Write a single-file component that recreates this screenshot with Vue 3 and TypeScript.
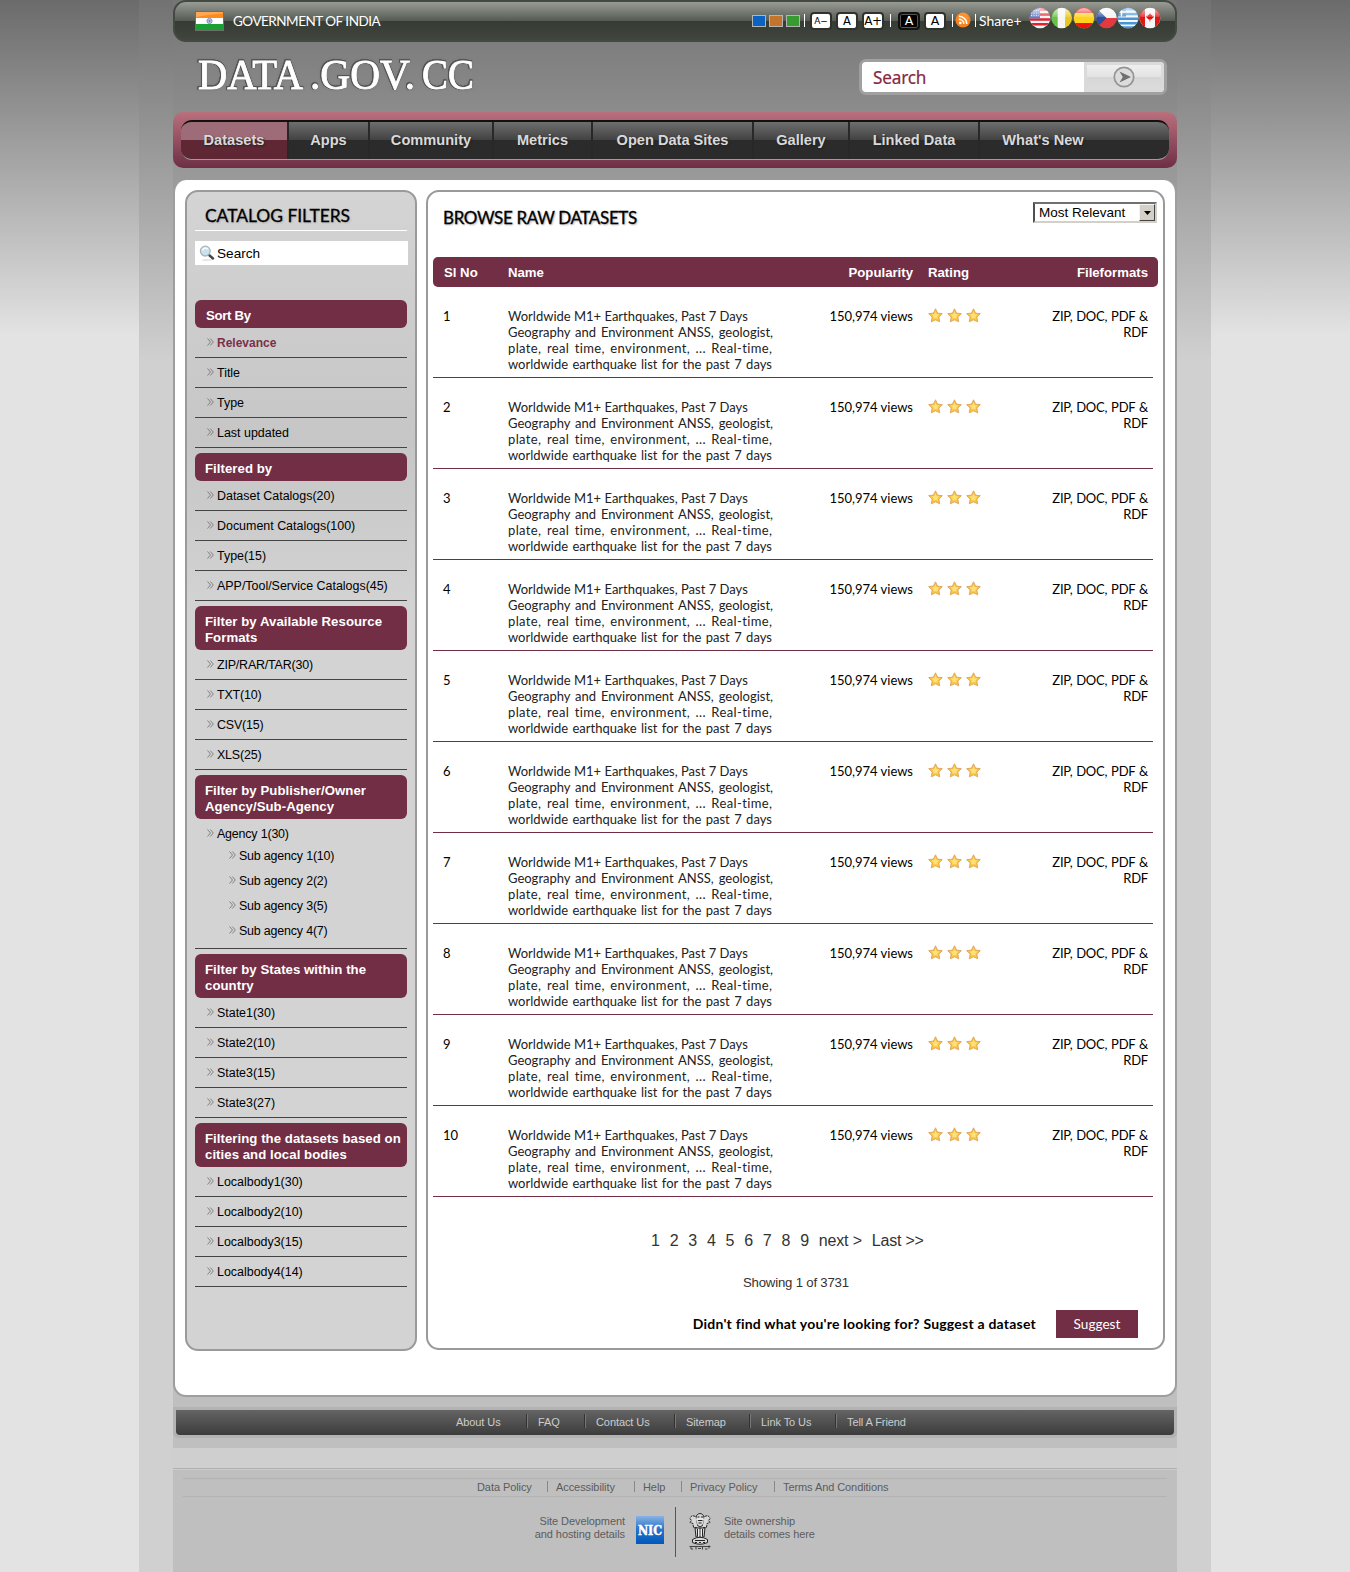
<script setup lang="ts">
interface Filter { title: string; lines: string[]; items: string[]; active?: string; subs?: string[]; tight?: boolean }
interface Link { label: string; w: number }

const nav: Link[] = [
  { label: 'Datasets', w: 108 }, { label: 'Apps', w: 81 }, { label: 'Community', w: 124 },
  { label: 'Metrics', w: 99 }, { label: 'Open Data Sites', w: 161 }, { label: 'Gallery', w: 96 },
  { label: 'Linked Data', w: 130 }, { label: "What's New", w: 126 },
]
const filters: Filter[] = [
  { title: 'Sort By', lines: ['Sort By'], items: ['Relevance', 'Title', 'Type', 'Last updated'], active: 'Relevance' },
  { title: 'Filtered by', lines: ['Filtered by'], items: ['Dataset Catalogs(20)', 'Document Catalogs(100)', 'Type(15)', 'APP/Tool/Service Catalogs(45)'] },
  { title: 'Formats', lines: ['Filter by Available Resource', 'Formats'], items: ['ZIP/RAR/TAR(30)', 'TXT(10)', 'CSV(15)', 'XLS(25)'], tight: true },
  { title: 'Agency', lines: ['Filter by Publisher/Owner', 'Agency/Sub-Agency'], items: ['Agency 1(30)'], subs: ['Sub agency 1(10)', 'Sub agency 2(2)', 'Sub agency 3(5)', 'Sub agency 4(7)'], tight: true },
  { title: 'States', lines: ['Filter by States within the', 'country'], items: ['State1(30)', 'State2(10)', 'State3(15)', 'State3(27)'] },
  { title: 'Cities', lines: ['Filtering the datasets based on', 'cities and local bodies'], items: ['Localbody1(30)', 'Localbody2(10)', 'Localbody3(15)', 'Localbody4(14)'] },
]
const description = ['Worldwide M1+ Earthquakes, Past 7 Days', 'Geography and Environment ANSS, geologist,', 'plate, real time, environment, ... Real-time,', 'worldwide earthquake list for the past 7 days']
const rows = Array.from({ length: 10 }, (_, i) => i + 1)
const pages = Array.from({ length: 9 }, (_, i) => i + 1)
const footA: Link[] = [
  { label: 'About Us', w: 70 }, { label: 'FAQ', w: 58 }, { label: 'Contact Us', w: 90 },
  { label: 'Sitemap', w: 75 }, { label: 'Link To Us', w: 86 }, { label: 'Tell A Friend', w: 80 },
]
const footB: Link[] = [
  { label: 'Data Policy', w: 70 }, { label: 'Accessibility', w: 87 }, { label: 'Help', w: 47 },
  { label: 'Privacy Policy', w: 93 }, { label: 'Terms And Conditions', w: 120 },
]
</script>

<template>
  <div class="page">
    <div class="band">
      <div class="container">
        <header class="topbar">
          <svg class="flag" width="29" height="20" viewBox="0 0 29 20">
            <rect x=".5" y=".5" width="28" height="19" fill="#fff" stroke="#6c6f68" />
            <rect x="1" y="1" width="27" height="6" fill="#ff8a1c" />
            <rect x="1" y="13" width="27" height="6" fill="#1a9f34" />
            <path d="M1 1h27v1.500Q14 3 1 6z" fill="#ffb36c" opacity=".7" />
            <circle cx="14.500" cy="10" r="2.600" fill="#b9bfe0" stroke="#8088c0" stroke-width=".9" />
            <circle cx="14.500" cy="10" r=".8" fill="#5560a8" />
          </svg>
          <span class="gov">GOVERNMENT OF INDIA</span>
          <div class="tools">
            <i class="sw blue"></i><i class="sw orange"></i><i class="sw green"></i>
            <i class="bar b1"></i>
            <span class="ab s">A−</span><span class="ab m">A</span><span class="ab l">A+</span>
            <i class="bar b2"></i>
            <span class="ab dark">A</span><span class="ab lt">A</span>
            <i class="bar b3"></i>
            <svg class="rss" width="16" height="16" viewBox="0 0 16 16">
              <circle cx="8" cy="8" r="7.600" fill="#f58220" /><circle cx="8" cy="6" r="5.500" fill="#ff9c3c" opacity=".6" />
              <circle cx="5.300" cy="11" r="1.300" fill="#fff" />
              <path d="M4 7.300a4.800 4.800 0 0 1 4.800 4.800M4 4.300a7.800 7.800 0 0 1 7.800 7.800" fill="none" stroke="#fff" stroke-width="1.500" />
            </svg>
            <i class="bar b4"></i>
            <span class="share">Share+</span>
            <svg class="flags" width="132" height="22" viewBox="0 0 132 22">
              <defs>
                <clipPath id="disc"><circle cx="11" cy="11" r="10.300" /></clipPath>
                <linearGradient id="gloss" x1="0" y1="0" x2="0" y2="1"><stop offset="0" stop-color="#fff" stop-opacity=".75" /><stop offset=".48" stop-color="#fff" stop-opacity=".15" /><stop offset=".5" stop-color="#fff" stop-opacity="0" /></linearGradient>
              </defs>
              <g clip-path="url(#disc)">
                <rect width="22" height="22" fill="#f3f3f3" />
                <path d="M0 2.500h22M0 7.500h22M0 12.500h22M0 17.300h22" stroke="#dd2230" stroke-width="2.500" />
                <rect width="11" height="11.300" fill="#5b7fc4" />
                <path d="M2 3.500h8M2 6h8M2 8.500h8" stroke="#fff" stroke-width=".8" stroke-dasharray="1 1.500" />
              </g>
              <g transform="translate(21.700)"><g clip-path="url(#disc)"><rect width="7.500" height="22" fill="#6cc04a" /><rect x="7" width="8" height="22" fill="#f6f6f2" /><rect x="15" width="7" height="22" fill="#e8c820" /></g></g>
              <g transform="translate(44)"><g clip-path="url(#disc)"><rect width="22" height="22" fill="#ffd21c" /><rect width="22" height="6" fill="#e0202c" /><rect y="16" width="22" height="6" fill="#ee1111" /></g></g>
              <g transform="translate(66.500)"><g clip-path="url(#disc)"><rect width="22" height="11" fill="#f2f2f2" /><rect y="11" width="22" height="11" fill="#e23a3e" /><path d="M0 0l11 11L0 22z" fill="#2a4f9c" /></g></g>
              <g transform="translate(88)"><g clip-path="url(#disc)"><rect width="22" height="22" fill="#f4f8fc" /><path d="M0 2.300h22M0 7h22M0 11.800h22M0 16.300h22M0 20.500h22" stroke="#4a94d6" stroke-width="2.400" /><rect width="9" height="9.500" fill="#3c80c4" /><path d="M4.500 0v9.500M0 5h9" stroke="#fff" stroke-width="1.500" /></g></g>
              <g transform="translate(110)"><g clip-path="url(#disc)"><rect width="22" height="22" fill="#f6f6f6" /><rect width="6" height="22" fill="#e01818" /><rect x="16" width="6" height="22" fill="#e01818" /><path d="M11 6l1.200 2 1.200-.6-.3 2 1.900-.9-.7 2.300-2.200 1.700h-.8v2h-.7v-2h-.8L7.700 10.800 7 8.500l1.900.9-.3-2 1.200.6z" fill="#e01010" /></g></g>
              <ellipse v-for="x in [11, 32.7, 55, 77.5, 99, 121]" :key="x" :cx="x" cy="10.500" rx="9.500" ry="9.500" fill="url(#gloss)" />
            </svg>
          </div>
        </header>

        <div class="brand">
          <svg class="logo" width="290" height="44" viewBox="0 0 290 44">
            <text x="4" y="35.500" textLength="105" lengthAdjust="spacingAndGlyphs" class="logo-text">DATA</text>
            <text x="116" y="35.500" textLength="105" lengthAdjust="spacingAndGlyphs" class="logo-text">.GOV.</text>
            <text x="228" y="35.500" textLength="52" lengthAdjust="spacingAndGlyphs" class="logo-text">CC</text>
          </svg>
          <div class="search">
            <span class="search-field">Search</span>
            <span class="search-btn">
              <svg width="22" height="22" viewBox="0 0 22 22"><circle cx="11" cy="11" r="9.700" fill="#dcdcdc" stroke="#949494" stroke-width="1.700" /><path d="M6.500 5.500L18 11 6.500 16.500 9.800 11z" fill="#707070" /></svg>
            </span>
          </div>
        </div>

        <nav class="nav">
          <div class="nav-in">
            <a v-for="(n, i) in nav" :key="n.label" :class="{ on: i === 0, last: i === nav.length - 1 }" :style="{ width: n.w + 'px' }">{{ n.label }}</a>
          </div>
        </nav>

        <main class="main">
          <aside class="side">
            <h2>CATALOG FILTERS</h2>
            <div class="side-search">
              <svg width="17" height="17" viewBox="0 0 17 17">
                <ellipse cx="8" cy="15" rx="5.500" ry=".8" fill="#ddd" />
                <path d="M9.500 9.500l4.500 4" stroke="#444" stroke-width="2.400" stroke-linecap="round" />
                <circle cx="6.300" cy="6.100" r="4.900" fill="#c9e2ee" stroke="#a9b4ba" stroke-width="1.300" />
                <path d="M3.500 5.500a3.300 3.300 0 0 1 5.500-1.500" stroke="#fff" stroke-width="1.200" fill="none" />
              </svg>
              <span>Search</span>
            </div>
            <section v-for="f in filters" :key="f.title" :class="{ tight: f.tight }">
              <h3 :class="{ first: f.active }"><span v-for="l in f.lines" :key="l">{{ l }}</span></h3>
              <ul>
                <li v-for="it in f.items" :key="it" :class="{ active: it === f.active, tall: f.subs }">
                  <div class="item">
                    <svg width="7" height="8" viewBox="0 0 7 8"><path d="M.5.500L3.500 4 .5 7.500M3.300.500L6.300 4 3.300 7.500" fill="none" stroke="#777" stroke-width=".9" /></svg>{{ it }}
                  </div>
                  <div v-for="s in f.subs" :key="s" class="item sub">
                    <svg width="7" height="8" viewBox="0 0 7 8"><path d="M.5.500L3.500 4 .5 7.500M3.300.500L6.300 4 3.300 7.500" fill="none" stroke="#777" stroke-width=".9" /></svg>{{ s }}
                  </div>
                </li>
              </ul>
            </section>
          </aside>

          <section class="content">
            <div class="head">
              <h2>BROWSE RAW DATASETS</h2>
              <div class="select"><span>Most Relevant</span><i><svg width="7" height="4" viewBox="0 0 7 4"><path d="M0 0h7L3.500 4z" fill="#000" /></svg></i></div>
            </div>
            <div class="thead"><span class="c1">Sl No</span><span class="c2">Name</span><span class="c3">Popularity</span><span class="c4">Rating</span><span class="c5">Fileformats</span></div>
            <div v-for="r in rows" :key="r" class="row">
              <span class="c1">{{ r }}</span>
              <span class="c2"><span v-for="(d, i) in description" :key="i" :class="'d' + i">{{ d }}</span></span>
              <span class="c3">150,974 views</span>
              <span class="c4">
                <svg v-for="s in 3" :key="s" width="15" height="15" viewBox="0 0 15 15">
                  <path d="M7.500.8l2 4.300 4.800.6-3.500 3.300.9 4.800-4.200-2-4.200 2 .9-4.800L.7 5.700l4.800-.6z" fill="#fbc53d" stroke="#dba05c" stroke-width=".9" stroke-linejoin="round" />
                  <path d="M7.500 3.500l1.200 2.700 2.800.4-2.200 1.900.5 1.800H5.200l.5-1.800-2.200-1.900 2.800-.4z" fill="#fde27c" />
                </svg>
              </span>
              <span class="c5"><span>ZIP, DOC, PDF &amp;</span><span>RDF</span></span>
            </div>
            <div class="pager"><a v-for="p in pages" :key="p">{{ p }}</a><a class="next">next &gt;</a><a class="end">Last &gt;&gt;</a></div>
            <div class="showing">Showing 1 of 3731</div>
            <div class="suggest"><b>Didn't find what you're looking for? Suggest a dataset</b><span class="btn">Suggest</span></div>
          </section>
        </main>

        <div class="foot1"><div class="foot1-in"><a v-for="f in footA" :key="f.label" :style="{ width: f.w + 'px' }">{{ f.label }}</a></div></div>
        <footer class="foot2">
          <div class="links"><a v-for="f in footB" :key="f.label" :style="{ width: f.w + 'px' }">{{ f.label }}</a></div>
          <div class="credits">
            <p class="dev">Site Development<br />and hosting details</p>
            <svg class="nic" width="28" height="28" viewBox="0 0 28 28">
              <defs><linearGradient id="nicbg" x1="0" y1="0" x2="0" y2="1"><stop offset="0" stop-color="#8ab3e4" /><stop offset=".45" stop-color="#2a74cc" /><stop offset="1" stop-color="#0058ba" /></linearGradient></defs>
              <rect width="28" height="28" fill="url(#nicbg)" />
              <text x="2" y="18.500" textLength="24" lengthAdjust="spacingAndGlyphs" class="nic-text">NIC</text>
            </svg>
            <i class="divider"></i>
            <svg class="emblem" width="24" height="38" viewBox="0 0 24 38">
              <g fill="#d8d8d8" stroke="#222" stroke-width="1">
                <path d="M8.500 3.500Q12-.5 15.500 3.500l1 4-1.500 5.500-3 2-3-2L7.500 7.500z" />
                <path d="M7.500 4.500Q3 2.500 2 6.500l1.500 2L2 10.500l3 1 .5 4h4M16.500 4.500Q21 2.500 22 6.500l-1.500 2 1.500 2-3 1-.5 4h-4" stroke-dasharray="2.500 .8" />
                <path d="M7 16h10l-1 9H8z" />
                <path d="M4.500 27.500Q12 23 19.500 27.500v3Q12 34 4.500 30.500z" />
              </g>
              <path d="M9.500 5h2M13 5h2M10 8.500h4.500M10.500 11h3M9.500 17v7.500M12 16v9M14.500 17v7.500M7 28.500h10M7 30.500h2m2 0h2m2 0h2" stroke="#222" stroke-width="1" />
              <path d="M9 7h6M10.700 17v8M13.300 17v8" stroke="#fff" stroke-width=".8" />
              <path d="M1.500 34.500h21M3 35v2h2M8 35v2.500M10 36.500h3M14.500 35v2.500M17 37h2.500M21 33.500v3" stroke="#333" stroke-width=".9" fill="none" />
            </svg>
            <p class="own">Site ownership<br />details comes here</p>
          </div>
        </footer>
      </div>
    </div>
  </div>
</template>

<style>
body { margin: 0; }
</style>

<style scoped>
* { box-sizing: border-box; }
h2, h3, ul, p { margin: 0; padding: 0; }
i { font-style: normal; display: block; flex: none; }
svg { display: block; flex: none; overflow: visible; }
a, span { white-space: nowrap; }
.page { width: 1350px; height: 1572px; overflow: hidden; font-family: "Liberation Sans", Arial, sans-serif; background: linear-gradient(#6b6b6b 0, #e3e3e3 335px); }
.band { margin-left: 139px; width: 1072px; height: 1572px; padding-left: 34px; background: linear-gradient(#727272 0, #d0d0d0 360px); }
.container { width: 1004px; height: 1572px; display: flex; flex-direction: column; background: linear-gradient(#757575 0, #bfbfbf 360px); }

.topbar { height: 42px; flex: none; border: 2px solid #434a42; border-radius: 13px; background: linear-gradient(#989c95 0, #555b53 19px, #363b33 19px, #40453d 38px); display: flex; padding: 0 14px 0 20px; }
.flag { margin-top: 9px; }
.gov { font: 13.5px/20px Lato, sans-serif; letter-spacing: -.5px; color: #fff; margin: 9px 0 0 9px; }
.tools { display: flex; margin-left: auto; color: #000; }
.sw { width: 14px; height: 12px; border: 1px solid #b5b5b5; margin: 13px 3px 0 0; }
.blue { background: #0a63c0; } .orange { background: #c4742b; } .green { background: #369b30; }
.bar { width: 1px; height: 13px; background: #fff; margin-top: 12px; }
.b1 { margin: 12px 5px 0 1px; } .b2 { margin: 12px 7px 0 2px; } .b3 { margin: 12px 2px 0 2px; } .b4 { margin: 12px 3px 0 4px; }
.ab { width: 22px; height: 18px; border: 2px solid #2e312c; border-radius: 4px; background: #fff; margin: 10px 4px 0 0; display: flex; align-items: center; justify-content: center; font: 12.5px/14px "DejaVu Sans", sans-serif; }
.ab.s { font-size: 9px; } .ab.m { font-size: 11.5px; } .ab.l { letter-spacing: -.5px; font-size: 12px; }
.ab.dark { background: #000; color: #fff; border-color: #111; box-shadow: inset 0 0 0 1px #555; }
.rss { margin-top: 10px; }
.share { font: 14px/20px Lato, sans-serif; color: #fff; margin-top: 9px; width: 42px; }
.flags { margin: 5px 0 0 8px; }

.brand { height: 70px; flex: none; display: flex; justify-content: space-between; padding: 0 10px 0 21px; }
.logo { margin-top: 11px; filter: drop-shadow(.8px 0 0 #555) drop-shadow(-.8px 0 0 #555) drop-shadow(0 .8px 0 #555) drop-shadow(0 -.8px 0 #555) drop-shadow(0 0 1px #777); }
.logo-text { font: 42px "Liberation Serif", serif; fill: #fff; stroke: #fff; stroke-width: .9px; }
.search { margin-top: 17px; width: 308px; height: 36px; border: 3px solid #a0a0a0; border-radius: 7px; overflow: hidden; background: #fff; display: flex; }
.search-field { width: 222px; padding-left: 11px; font: 17.2px/32px "Noto Sans", sans-serif; letter-spacing: -.2px; -webkit-text-stroke: .2px #86293f; color: #86293f; }
.search-btn { flex: 1; border: 3px solid #dadada; background: linear-gradient(#efefef 0, #e3e3e3 50%, #d5d5d5 50%, #dcdcdc); display: flex; align-items: center; justify-content: center; }

.nav { height: 56px; flex: none; padding: 8px; border-radius: 10px; background: linear-gradient(#ba707d, #6d2f45); }
.nav-in { height: 40px; border-radius: 11px; border-top: 2px solid #111; border-bottom: 1px solid #a9979c; overflow: hidden; display: flex; background: linear-gradient(#6e6e6e, #424242 18px, #2b2b2b 18px); }
.nav-in a { flex: none; border-right: 2px solid #282828; line-height: 37px; text-align: center; font-weight: bold; font-size: 14.6px; color: #d9d9d9; text-shadow: 1px 1px 2px #222; }
.nav-in a.on { background: linear-gradient(#9d6c78 18px, #5e2733 18px); }
.nav-in a.last { border: 0; }

.main { margin-top: 12px; height: 1217px; flex: none; border: 2px solid #9e9e9e; border-top: 0; border-radius: 13px; background: #fff; display: flex; padding: 10px 10px 0; }
.side { width: 232px; height: 1161px; border: 2px solid #9a9a9a; border-radius: 13px; padding: 0 8px; background: linear-gradient(#d4d4d4 0, #c6c6c6 250px, #d3d3d3 420px); }
h2 { font: 17px/24px Lato, sans-serif; color: #000; text-shadow: 1px 1px 2px #aaa; -webkit-text-stroke: .3px #000; white-space: nowrap; }
.side h2 { height: 39px; padding: 12px 0 0 10px; border-bottom: 1px solid #fff; font-size: 17.400px; }
.side-search { width: 213px; height: 24px; margin: 10px 0 35px; background: #fff; display: flex; padding: 4px 0 0 4px; font-size: 13.600px; line-height: 17px; }
.side-search span { margin-left: 1px; }
.side section { margin-bottom: 5px; width: 212px; }
.side h3 { background: #712e45; border-radius: 6px; padding: 8px 0 4px 10px; font: bold 13.200px/16px "Liberation Sans", sans-serif; letter-spacing: .05px; color: #fff; }
.side h3.first { padding-left: 11px; letter-spacing: -.3px; }
.side h3 span { display: block; }
ul { list-style: none; }
li { height: 30px; border-bottom: 1px solid #444; }
li.tall { height: 130px; }
.item { display: flex; height: 22px; padding: 6px 0 0 11.500px; font-size: 12.450px; line-height: 18px; white-space: nowrap; color: #000; }
.item svg { margin: 4px 3.500px 0 0; }
.item.sub { height: 25px; padding-left: 33.500px; }
.tight .item { letter-spacing: -.18px; }
.active .item { font-weight: bold; color: #7c3048; font-size: 12px; }

.content { margin-left: 9px; width: 739px; height: 1160px; border: 2px solid #9a9a9a; border-radius: 13px; padding: 0 5px; }
.head { height: 65px; display: flex; justify-content: space-between; }
.head h2 { padding: 14px 0 0 10px; letter-spacing: -.35px; }
.select { width: 124px; height: 21px; margin: 10px 1px 0 0; border: 2px solid; border-color: #707070 #d4d0c8 #d4d0c8 #505050; display: flex; justify-content: space-between; font-size: 13.500px; line-height: 18px; padding-left: 4px; color: #000; }
.select i { width: 16px; border: 1px solid; border-color: #f4f4f4 #444 #444 #f4f4f4; background: #d4d0c8; display: flex; align-items: center; justify-content: center; }
.thead, .row { display: flex; }
.thead { width: 725px; height: 30px; background: #712e45; border-radius: 5px; font: bold 13.200px/31px "Liberation Sans", sans-serif; color: #fff; }
.c1 { width: 75px; padding-left: 10px; flex: none; }
.thead .c1 { padding-left: 11px; }
.c2 { width: 285px; flex: none; }
.c3 { width: 120px; text-align: right; flex: none; }
.c4 { width: 75px; padding-left: 15px; flex: none; }
.c5 { width: 160px; text-align: right; flex: none; }
.row { width: 720px; height: 91px; border-bottom: 1px solid #712e45; padding-top: 21px; font: 13px/16px Lato, sans-serif; font-variant-ligatures: none; color: #000; }
.row .c2 { color: #222; }
.row .c2 > span, .row .c5 > span { display: block; }
.row .d1 { word-spacing: 1.500px; }
.row .d2 { word-spacing: 1.800px; letter-spacing: .37px; }
.row .d3 { word-spacing: 1.100px; }
.row .c5 { letter-spacing: -.22px; word-spacing: .7px; }
.row .c4 { display: flex; gap: 4px; }
.row .c4 svg { flex: none; }
.pager { display: flex; margin: 34px 0 0 218px; font-size: 16px; line-height: 20px; color: #333; }
.pager a { width: 18.650px; flex: none; }
.pager a.next { width: 53px; letter-spacing: -.15px; }
.pager a.end { letter-spacing: -.2px; }
.showing { margin: 22px 0 0 310px; font-size: 13.200px; letter-spacing: -.2px; line-height: 20px; color: #333; }
.suggest { margin-top: 17px; display: flex; justify-content: flex-end; padding-right: 20px; line-height: 28px; font-family: Lato, sans-serif; color: #000; }
.suggest b { font-size: 14px; letter-spacing: .22px; white-space: nowrap; }
.btn { width: 82px; height: 28px; margin-left: 20px; background: #712e45; color: #fff; text-align: center; font-size: 13.600px; }

.foot1 { margin-top: 10px; height: 31px; flex: none; padding: 3px; background: #b3b3b3; border-radius: 0 0 5px 5px; }
.foot1-in { height: 25px; background: linear-gradient(#646464, #3c3c3c); border-radius: 0 0 4px 4px; display: flex; padding: 4px 0 0 280px; font-size: 11px; letter-spacing: -.08px; color: #ccc; }
.foot1-in a { height: 14px; line-height: 17px; flex: none; }
.foot1-in a + a { border-left: 1px solid #333; box-shadow: inset 1px 0 #777; padding-left: 11px; }
.foot2 { margin-top: 10px; height: 124px; flex: none; border-top: 20px solid #cfcfcf; background: linear-gradient(#b0b0b0 1px, #d0d0d0 1px, #c8c8c8 2px, #bfbfbf 2px); padding: 10px 10px 0; color: #5c5c5c; font-size: 11px; }
.links { height: 19px; border: 1px solid #b3b3b3; border-width: 1px 0; display: flex; padding: 2px 0 0 294px; letter-spacing: -.08px; }
.links a { height: 11px; line-height: 13px; flex: none; }
.links a + a { border-left: 1px solid #888; padding-left: 8px; }
.credits { display: flex; line-height: 13px; letter-spacing: -.08px; }
.dev { width: 442px; text-align: right; padding-top: 18px; }
.nic { margin: 19px 11px 0 11px; }
.nic-text { font: bold 12px "DejaVu Serif", serif; fill: #fff; stroke: #fff; stroke-width: .5px; }
.divider { width: 1px; height: 50px; background: #555; margin-top: 10px; }
.emblem { margin: 15px 12px 0 12px; }
.own { padding-top: 18px; }
</style>
